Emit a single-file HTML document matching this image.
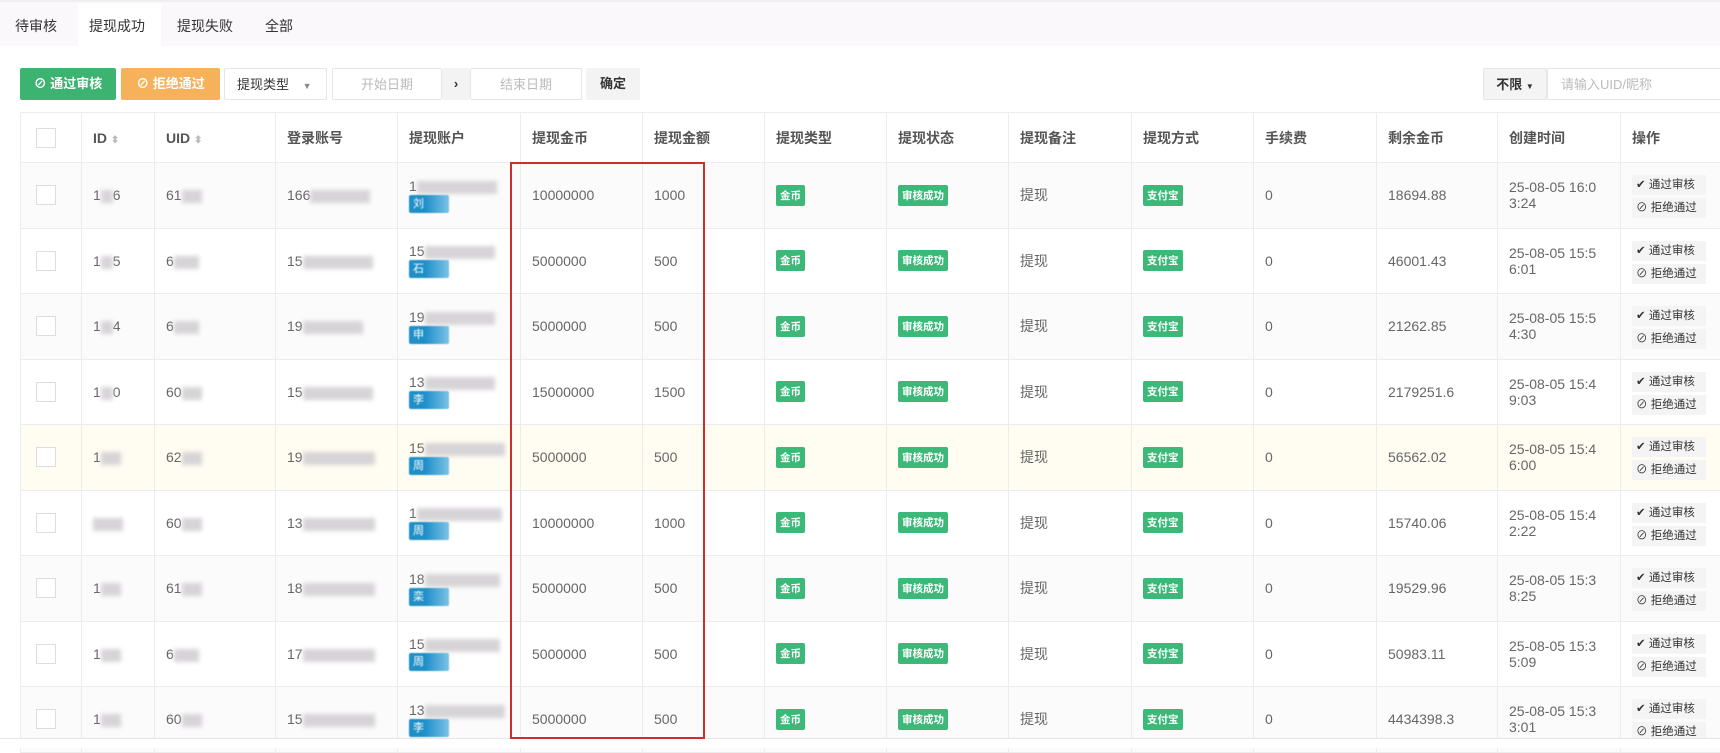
<!DOCTYPE html><html><head><meta charset="utf-8"><style>
*{box-sizing:border-box;margin:0;padding:0}
body{width:1720px;height:748px;overflow:hidden;background:#fff;font-family:"Liberation Sans","Noto Sans CJK SC",sans-serif;color:#666;font-size:14px;position:relative}
.tabs{position:absolute;left:0;top:0;width:1720px;height:46px;background:#faf8fa;border-top:2px solid #f0eef0}
.tab{position:absolute;top:14px;font-size:14px;color:#333}
.tabact{position:absolute;left:78px;top:2px;width:83px;height:44px;background:#fff}
.btn{position:absolute;top:68px;height:32px;line-height:32px;font-size:13px;border-radius:2px}
table{position:absolute;left:20px;top:112px;border-collapse:collapse;table-layout:fixed;width:1700px}
td,th{border:1px solid #ececec;height:65.5px;padding:0 11px;text-align:left;font-weight:normal;white-space:nowrap;overflow:hidden}
th{height:50px;font-weight:bold;color:#555;font-size:14px}
tr.s td{background:#fcfbfc}
tr.y td{background:#fffcf1}
.cb{width:20px;height:20px;border:1px solid #ddd;background:#fff;margin-left:4px}
.bl{display:inline-block;width:60px;height:13px;background:#d6d4d6;filter:blur(2px);vertical-align:middle}
.tag{display:inline-block;background:#3cb879;color:#fff;font-size:10.5px;padding:3px 4px;border-radius:2px;font-weight:bold}
.nm{display:inline-block;width:40px;height:18px;background:linear-gradient(90deg,#1f8fc8 40%,#7ac3e6);color:#fff;font-size:11px;padding-left:4px;line-height:18px;border-radius:2px;filter:blur(.5px)}
.op{display:block;width:74px;height:20px;line-height:20px;font-size:11.5px;background:#f5f4f5;color:#333;padding-left:4px;margin:3px 0 0 0}
td:last-child{padding-left:11px}
.sort{color:#bbb;font-size:10px}
</style></head><body>
<div class="tabs"><div class="tabact"></div>
<span class="tab" style="left:15px">待审核</span><span class="tab" style="left:89px">提现成功</span><span class="tab" style="left:177px">提现失败</span><span class="tab" style="left:265px">全部</span></div>
<div class="btn" style="left:20px;width:96px;background:#3cb371;color:#fff;text-align:center;font-weight:bold">⊘ 通过审核</div>
<div class="btn" style="left:121px;width:99px;background:#f5b25a;color:#fff;text-align:center;font-weight:bold">⊘ 拒绝通过</div>
<div class="btn" style="left:224px;width:103px;border:1px solid #e6e6e6;color:#333;padding-left:12px">提现类型 <span style="font-size:9px;color:#888;margin-left:10px">▼</span></div>
<div class="btn" style="left:332px;width:110px;border:1px solid #e6e6e6;color:#bbb;text-align:center">开始日期</div>
<div class="btn" style="left:442px;width:28px;background:#f3f3f3;color:#333;text-align:center;font-weight:bold">›</div>
<div class="btn" style="left:470px;width:112px;border:1px solid #e6e6e6;color:#bbb;text-align:center">结束日期</div>
<div class="btn" style="left:586px;width:54px;background:#f3f3f3;color:#333;text-align:center;font-weight:bold">确定</div>
<div class="btn" style="left:1483px;width:64px;background:#f4f4f4;border:1px solid #e6e6e6;color:#333;text-align:center;font-weight:bold">不限 <span style="font-size:8px">▼</span></div>
<div class="btn" style="left:1547px;width:180px;border:1px solid #e6e6e6;color:#bbb;padding-left:13px">请输入UID/昵称</div>
<table><colgroup><col style="width:61px"><col style="width:73px"><col style="width:121px"><col style="width:122px"><col style="width:123px"><col style="width:122px"><col style="width:122px"><col style="width:122px"><col style="width:122px"><col style="width:123px"><col style="width:122px"><col style="width:123px"><col style="width:121px"><col style="width:123px"><col style="width:100px"></colgroup>
<tr><th><div class="cb"></div></th><th>ID <span class="sort">⬍</span></th><th>UID <span class="sort">⬍</span></th><th>登录账号</th><th>提现账户</th><th>提现金币</th><th>提现金额</th><th>提现类型</th><th>提现状态</th><th>提现备注</th><th>提现方式</th><th>手续费</th><th>剩余金币</th><th>创建时间</th><th>操作</th></tr>
<tr class="s"><td><div class="cb"></div></td><td>1<span class="bl" style="width:12px"></span>6</td><td>61<span class="bl" style="width:20px"></span></td><td>166<span class="bl"></span></td><td>1<span class="bl" style="width:80px"></span><br><span class="nm">刘</span></td><td>10000000</td><td>1000</td><td><span class="tag">金币</span></td><td><span class="tag">审核成功</span></td><td>提现</td><td><span class="tag">支付宝</span></td><td>0</td><td>18694.88</td><td>25-08-05 16:0<br>3:24</td><td><span class="op">✔ 通过审核</span><span class="op">⊘ 拒绝通过</span></td></tr>
<tr><td><div class="cb"></div></td><td>1<span class="bl" style="width:12px"></span>5</td><td>6<span class="bl" style="width:25px"></span></td><td>15<span class="bl" style="width:70px"></span></td><td>15<span class="bl" style="width:70px"></span><br><span class="nm">石</span></td><td>5000000</td><td>500</td><td><span class="tag">金币</span></td><td><span class="tag">审核成功</span></td><td>提现</td><td><span class="tag">支付宝</span></td><td>0</td><td>46001.43</td><td>25-08-05 15:5<br>6:01</td><td><span class="op">✔ 通过审核</span><span class="op">⊘ 拒绝通过</span></td></tr>
<tr class="s"><td><div class="cb"></div></td><td>1<span class="bl" style="width:12px"></span>4</td><td>6<span class="bl" style="width:25px"></span></td><td>19<span class="bl" style="width:60px"></span></td><td>19<span class="bl" style="width:70px"></span><br><span class="nm">申</span></td><td>5000000</td><td>500</td><td><span class="tag">金币</span></td><td><span class="tag">审核成功</span></td><td>提现</td><td><span class="tag">支付宝</span></td><td>0</td><td>21262.85</td><td>25-08-05 15:5<br>4:30</td><td><span class="op">✔ 通过审核</span><span class="op">⊘ 拒绝通过</span></td></tr>
<tr><td><div class="cb"></div></td><td>1<span class="bl" style="width:12px"></span>0</td><td>60<span class="bl" style="width:20px"></span></td><td>15<span class="bl" style="width:70px"></span></td><td>13<span class="bl" style="width:70px"></span><br><span class="nm">李</span></td><td>15000000</td><td>1500</td><td><span class="tag">金币</span></td><td><span class="tag">审核成功</span></td><td>提现</td><td><span class="tag">支付宝</span></td><td>0</td><td>2179251.6</td><td>25-08-05 15:4<br>9:03</td><td><span class="op">✔ 通过审核</span><span class="op">⊘ 拒绝通过</span></td></tr>
<tr class="y"><td><div class="cb"></div></td><td>1<span class="bl" style="width:20px"></span></td><td>62<span class="bl" style="width:20px"></span></td><td>19<span class="bl" style="width:72px"></span></td><td>15<span class="bl" style="width:80px"></span><br><span class="nm">周</span></td><td>5000000</td><td>500</td><td><span class="tag">金币</span></td><td><span class="tag">审核成功</span></td><td>提现</td><td><span class="tag">支付宝</span></td><td>0</td><td>56562.02</td><td>25-08-05 15:4<br>6:00</td><td><span class="op">✔ 通过审核</span><span class="op">⊘ 拒绝通过</span></td></tr>
<tr><td><div class="cb"></div></td><td><span class="bl" style="width:30px"></span></td><td>60<span class="bl" style="width:20px"></span></td><td>13<span class="bl" style="width:72px"></span></td><td>1<span class="bl" style="width:85px"></span><br><span class="nm">周</span></td><td>10000000</td><td>1000</td><td><span class="tag">金币</span></td><td><span class="tag">审核成功</span></td><td>提现</td><td><span class="tag">支付宝</span></td><td>0</td><td>15740.06</td><td>25-08-05 15:4<br>2:22</td><td><span class="op">✔ 通过审核</span><span class="op">⊘ 拒绝通过</span></td></tr>
<tr class="s"><td><div class="cb"></div></td><td>1<span class="bl" style="width:20px"></span></td><td>61<span class="bl" style="width:20px"></span></td><td>18<span class="bl" style="width:72px"></span></td><td>18<span class="bl" style="width:75px"></span><br><span class="nm">栾</span></td><td>5000000</td><td>500</td><td><span class="tag">金币</span></td><td><span class="tag">审核成功</span></td><td>提现</td><td><span class="tag">支付宝</span></td><td>0</td><td>19529.96</td><td>25-08-05 15:3<br>8:25</td><td><span class="op">✔ 通过审核</span><span class="op">⊘ 拒绝通过</span></td></tr>
<tr><td><div class="cb"></div></td><td>1<span class="bl" style="width:20px"></span></td><td>6<span class="bl" style="width:25px"></span></td><td>17<span class="bl" style="width:72px"></span></td><td>15<span class="bl" style="width:75px"></span><br><span class="nm">周</span></td><td>5000000</td><td>500</td><td><span class="tag">金币</span></td><td><span class="tag">审核成功</span></td><td>提现</td><td><span class="tag">支付宝</span></td><td>0</td><td>50983.11</td><td>25-08-05 15:3<br>5:09</td><td><span class="op">✔ 通过审核</span><span class="op">⊘ 拒绝通过</span></td></tr>
<tr class="s"><td><div class="cb"></div></td><td>1<span class="bl" style="width:20px"></span></td><td>60<span class="bl" style="width:20px"></span></td><td>15<span class="bl" style="width:72px"></span></td><td>13<span class="bl" style="width:80px"></span><br><span class="nm">李</span></td><td>5000000</td><td>500</td><td><span class="tag">金币</span></td><td><span class="tag">审核成功</span></td><td>提现</td><td><span class="tag">支付宝</span></td><td>0</td><td>4434398.3</td><td>25-08-05 15:3<br>3:01</td><td><span class="op">✔ 通过审核</span><span class="op">⊘ 拒绝通过</span></td></tr>
</table>
<div style="position:absolute;left:0;top:738px;width:1720px;height:10px;background:#fff;border-top:1px solid #e6e6e6"></div>
<div style="position:absolute;left:510px;top:162px;width:195px;height:577px;border:2px solid #c9302c"></div>
</body></html>
